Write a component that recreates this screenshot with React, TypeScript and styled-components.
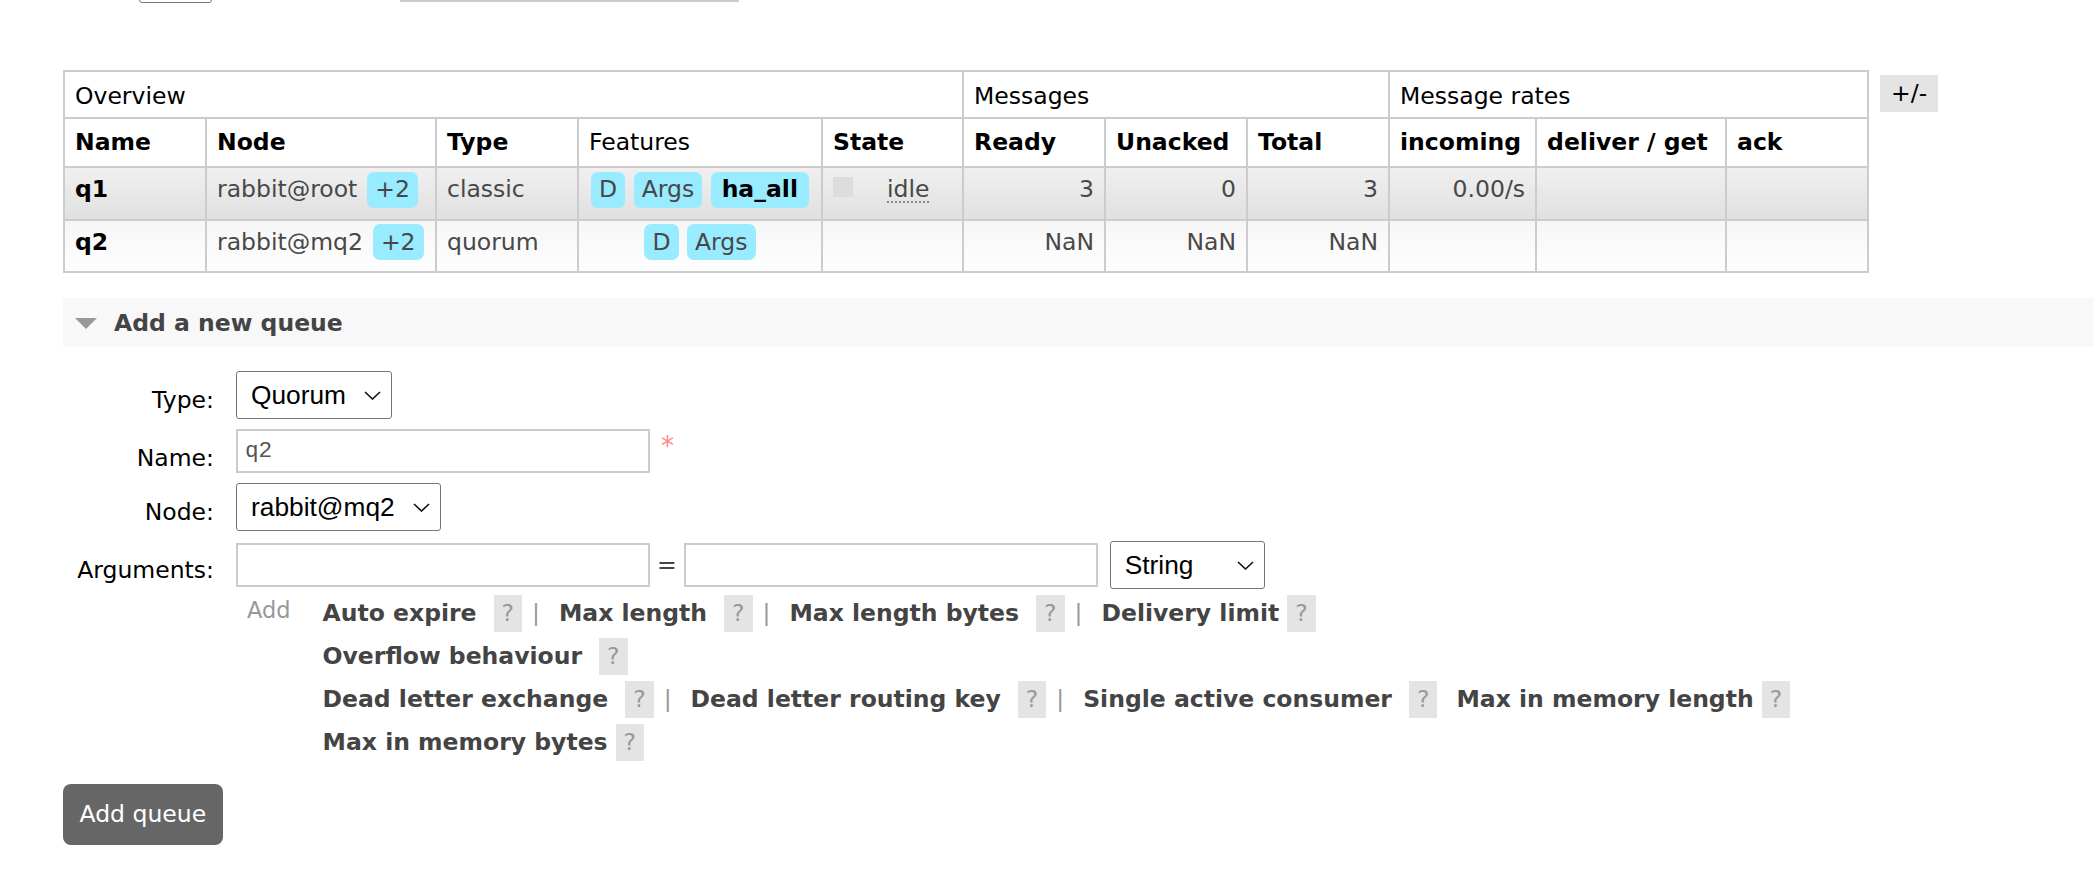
import React from "react";
import styled, { createGlobalStyle } from "styled-components";

const GlobalStyle = createGlobalStyle`
  html, body { margin: 0; padding: 0; background: #fff; }
  body {
    font-family: "DejaVu Sans", Verdana, sans-serif;
    font-size: 23.5px;
    color: #484848;
  }
`;

const Page = styled.div`
  display: flex;
  flex-direction: column;
  align-items: flex-start;
  padding-left: 63px;
`;

const TopStrip = styled.div`
  display: flex;
  align-items: flex-end;
  height: 3px;
  overflow: hidden;
`;

const SelectStub = styled.div`
  flex: none;
  margin-left: 76px;
  width: 73px;
  height: 20px;
  box-sizing: border-box;
  border: 1px solid #767676;
  border-radius: 3px;
`;

const InputStub = styled.div`
  flex: none;
  align-self: flex-start;
  margin-left: 188px;
  width: 339px;
  border-bottom: 2px solid #ccc;
`;

const TableArea = styled.div`
  display: flex;
  align-items: flex-start;
  margin-top: 67px;
`;

const QueueTable = styled.table`
  border-collapse: collapse;
  table-layout: fixed;
  width: 1804px;
`;

const Col = styled.col<{ $w: number }>`
  width: ${(p) => p.$w}px;
`;

const GroupTh = styled.th`
  border: 2px solid #ccc;
  padding: 11px 10px 7px;
  line-height: 27px;
  font-weight: normal;
  text-align: left;
  color: #000;
  white-space: nowrap;
`;

const ColTh = styled.th<{ $plain?: boolean }>`
  border: 2px solid #ccc;
  padding: 10px;
  line-height: 27px;
  text-align: left;
  color: #000;
  font-weight: ${(p) => (p.$plain ? "normal" : "bold")};
  white-space: nowrap;
`;

const DataRow = styled.tr<{ $alt: 1 | 2 }>`
  & > td {
    background: ${(p) =>
      p.$alt === 1
        ? "linear-gradient(#f0f0f0, #e0e0e0)"
        : "linear-gradient(#f6f6f6, #fefefe)"};
  }
`;

const Td = styled.td<{ $align?: "left" | "right" | "center"; $name?: boolean }>`
  border: 2px solid #ccc;
  padding: 3px 10px 11px;
  height: 36px;
  line-height: 36px;
  vertical-align: top;
  white-space: nowrap;
  text-align: ${(p) => p.$align ?? "left"};
  color: ${(p) => (p.$name ? "#000" : "#484848")};
  font-weight: ${(p) => (p.$name ? "bold" : "normal")};
`;

const Tag = styled.abbr<{ $strong?: boolean }>`
  display: inline-block;
  background: #99ebff;
  border-radius: 7px;
  padding: 4.5px ${(p) => (p.$strong ? 11 : 8)}px;
  line-height: 27px;
  text-decoration: none;
  color: ${(p) => (p.$strong ? "#000" : "#484848")};
  font-weight: ${(p) => (p.$strong ? "bold" : "normal")};
  & + & { margin-left: 8.5px; }
`;

const NodeTag = styled(Tag)`
  margin-left: 10px;
`;

const StateDot = styled.span`
  display: inline-block;
  width: 20px;
  height: 20px;
  background: #ddd;
  margin-right: 34px;
`;

const StateText = styled.abbr`
  text-decoration-line: underline;
  text-decoration-style: dotted;
  text-decoration-color: #888;
  text-decoration-thickness: 1.5px;
  text-underline-offset: 4px;
`;

const ToggleColumns = styled.button`
  margin: 5px 0 0 11px;
  width: 58px;
  height: 37px;
  padding: 0;
  border: none;
  background: #e4e4e4;
  color: #000;
  font: inherit;
  line-height: 37px;
`;

const SectionHeader = styled.div`
  align-self: stretch;
  margin-top: 25px;
  display: flex;
  align-items: center;
  padding: 12px 0 10px 12px;
  background: #f8f8f8;
`;

const SectionTitle = styled.h2`
  margin: 0 0 0 17px;
  font-size: 23.5px;
  line-height: 27px;
  font-weight: bold;
  color: #444;
`;

const FormGrid = styled.div`
  display: grid;
  grid-template-columns: 151px auto;
  column-gap: 22px;
  row-gap: 10px;
  align-items: start;
  margin-top: 24px;
`;

const FieldLabel = styled.label`
  padding-top: 16px;
  line-height: 27px;
  text-align: right;
  color: #000;
  white-space: nowrap;
`;

const ControlRow = styled.div`
  display: flex;
  align-items: center;
`;

const SelectBox = styled.div<{ $w: number }>`
  width: ${(p) => p.$w}px;
  height: 48px;
  box-sizing: border-box;
  display: flex;
  align-items: center;
  justify-content: space-between;
  padding: 0 10px 0 14px;
  border: 1px solid #767676;
  border-radius: 3px;
  background: #fff;
  font-family: "Liberation Sans", Arial, sans-serif;
  font-size: 26.3px;
  color: #000;
  white-space: nowrap;
`;

const TextInput = styled.input`
  width: 414px;
  height: 44px;
  box-sizing: border-box;
  margin: 0;
  padding: 0 7px;
  border: 2px solid #ccc;
  background: #fff;
  font-family: "Liberation Mono", "Courier New", monospace;
  font-size: 22.7px;
  color: #555;
  outline: none;
`;

const Required = styled.span`
  align-self: flex-start;
  margin: 4px 0 0 11px;
  font-size: 26px;
  line-height: 27px;
  color: #f88;
`;

const ArgsCell = styled.div`
  display: flex;
  flex-direction: column;
  gap: 3px;
`;

const ArgControls = styled.div`
  display: flex;
  align-items: center;
  gap: 7px;
`;

const Equals = styled.span`
  color: #444;
  line-height: 27px;
`;

const TypeSelect = styled(SelectBox)`
  margin-left: 5px;
`;

const ArgHelpRow = styled.div`
  display: flex;
  align-items: flex-start;
  gap: 32px;
`;

const AddLabel = styled.span`
  margin-left: 11px;
  font-size: 22.5px;
  line-height: 36px;
  color: #999;
`;

const LinkLines = styled.div`
  display: flex;
  flex-direction: column;
`;

const LinkLine = styled.div`
  height: 43px;
  line-height: 43px;
  white-space: nowrap;
`;

const ArgLink = styled.span<{ $first?: boolean }>`
  margin-left: ${(p) => (p.$first ? 0 : 19)}px;
  font-weight: bold;
  color: #444;
  cursor: pointer;
`;

const Help = styled.span<{ $spaced?: boolean }>`
  display: inline-block;
  margin-left: ${(p) => (p.$spaced ? 17 : 8)}px;
  padding: 5px 8px;
  line-height: 27px;
  background: #e4e4e4;
  color: #999;
  font-weight: normal;
`;

const Pipe = styled.span`
  margin-left: 10px;
  color: #999;
  font-weight: normal;
`;

const SubmitButton = styled.button`
  margin-top: 20px;
  padding: 17px 16.5px;
  border: none;
  border-radius: 8px;
  background: #666;
  color: #fff;
  font: inherit;
  line-height: 27px;
  cursor: pointer;
`;

const Chevron = () => (
  <svg width="17" height="9" viewBox="0 0 17 9" aria-hidden="true">
    <path d="M1 1 L8.5 8 L16 1" fill="none" stroke="#111" strokeWidth="1.6" />
  </svg>
);

const Triangle = () => (
  <svg width="22" height="11" viewBox="0 0 22 11" aria-hidden="true">
    <polygon points="0,0 22,0 11,11" fill="#999" />
  </svg>
);

type Feature = { label: string; strong?: boolean };
type Queue = {
  name: string;
  node: string;
  type: string;
  features: Feature[];
  state?: string;
  ready: string;
  unacked: string;
  total: string;
  incoming: string;
};

const queues: Queue[] = [
  {
    name: "q1",
    node: "rabbit@root",
    type: "classic",
    features: [{ label: "D" }, { label: "Args" }, { label: "ha_all", strong: true }],
    state: "idle",
    ready: "3",
    unacked: "0",
    total: "3",
    incoming: "0.00/s",
  },
  {
    name: "q2",
    node: "rabbit@mq2",
    type: "quorum",
    features: [{ label: "D" }, { label: "Args" }],
    ready: "NaN",
    unacked: "NaN",
    total: "NaN",
    incoming: "",
  },
];

const columns = [142, 230, 142, 244, 141, 142, 142, 142, 147, 190, 142];

type Link = { label: string; spaced?: boolean; pipe?: boolean };
const linkLines: Link[][] = [
  [
    { label: "Auto expire", spaced: true, pipe: true },
    { label: "Max length", spaced: true, pipe: true },
    { label: "Max length bytes", spaced: true, pipe: true },
    { label: "Delivery limit" },
  ],
  [{ label: "Overflow behaviour", spaced: true }],
  [
    { label: "Dead letter exchange", spaced: true, pipe: true },
    { label: "Dead letter routing key", spaced: true, pipe: true },
    { label: "Single active consumer", spaced: true },
    { label: "Max in memory length" },
  ],
  [{ label: "Max in memory bytes" }],
];

export default function App() {
  return (
    <>
      <GlobalStyle />
      <Page>
        <TopStrip>
          <SelectStub />
          <InputStub />
        </TopStrip>

        <TableArea>
          <QueueTable>
            <colgroup>
              {columns.map((w, i) => (
                <Col key={i} $w={w} />
              ))}
            </colgroup>
            <thead>
              <tr>
                <GroupTh colSpan={5}>Overview</GroupTh>
                <GroupTh colSpan={3}>Messages</GroupTh>
                <GroupTh colSpan={3}>Message rates</GroupTh>
              </tr>
              <tr>
                <ColTh>Name</ColTh>
                <ColTh>Node</ColTh>
                <ColTh>Type</ColTh>
                <ColTh $plain>Features</ColTh>
                <ColTh>State</ColTh>
                <ColTh>Ready</ColTh>
                <ColTh>Unacked</ColTh>
                <ColTh>Total</ColTh>
                <ColTh>incoming</ColTh>
                <ColTh>deliver / get</ColTh>
                <ColTh>ack</ColTh>
              </tr>
            </thead>
            <tbody>
              {queues.map((q, i) => (
                <DataRow key={q.name} $alt={i % 2 === 0 ? 1 : 2}>
                  <Td $name>{q.name}</Td>
                  <Td>
                    {q.node}
                    <NodeTag>+2</NodeTag>
                  </Td>
                  <Td>{q.type}</Td>
                  <Td $align="center">
                    {q.features.map((f) => (
                      <Tag key={f.label} $strong={f.strong}>
                        {f.label}
                      </Tag>
                    ))}
                  </Td>
                  <Td>
                    {q.state && (
                      <>
                        <StateDot />
                        <StateText>{q.state}</StateText>
                      </>
                    )}
                  </Td>
                  <Td $align="right">{q.ready}</Td>
                  <Td $align="right">{q.unacked}</Td>
                  <Td $align="right">{q.total}</Td>
                  <Td $align="right">{q.incoming}</Td>
                  <Td />
                  <Td />
                </DataRow>
              ))}
            </tbody>
          </QueueTable>
          <ToggleColumns>+/-</ToggleColumns>
        </TableArea>

        <SectionHeader>
          <Triangle />
          <SectionTitle>Add a new queue</SectionTitle>
        </SectionHeader>

        <FormGrid>
          <FieldLabel>Type:</FieldLabel>
          <ControlRow>
            <SelectBox $w={156}>
              Quorum
              <Chevron />
            </SelectBox>
          </ControlRow>

          <FieldLabel>Name:</FieldLabel>
          <ControlRow>
            <TextInput defaultValue="q2" />
            <Required>*</Required>
          </ControlRow>

          <FieldLabel>Node:</FieldLabel>
          <ControlRow>
            <SelectBox $w={205}>
              rabbit@mq2
              <Chevron />
            </SelectBox>
          </ControlRow>

          <FieldLabel>Arguments:</FieldLabel>
          <ArgsCell>
            <ArgControls>
              <TextInput />
              <Equals>=</Equals>
              <TextInput />
              <TypeSelect $w={155}>
                String
                <Chevron />
              </TypeSelect>
            </ArgControls>
            <ArgHelpRow>
              <AddLabel>Add</AddLabel>
              <LinkLines>
                {linkLines.map((line, li) => (
                  <LinkLine key={li}>
                    {line.map((l, j) => (
                      <React.Fragment key={l.label}>
                        <ArgLink $first={j === 0}>{l.label}</ArgLink>
                        <Help $spaced={l.spaced}>?</Help>
                        {l.pipe && <Pipe>|</Pipe>}
                      </React.Fragment>
                    ))}
                  </LinkLine>
                ))}
              </LinkLines>
            </ArgHelpRow>
          </ArgsCell>
        </FormGrid>

        <SubmitButton>Add queue</SubmitButton>
      </Page>
    </>
  );
}
